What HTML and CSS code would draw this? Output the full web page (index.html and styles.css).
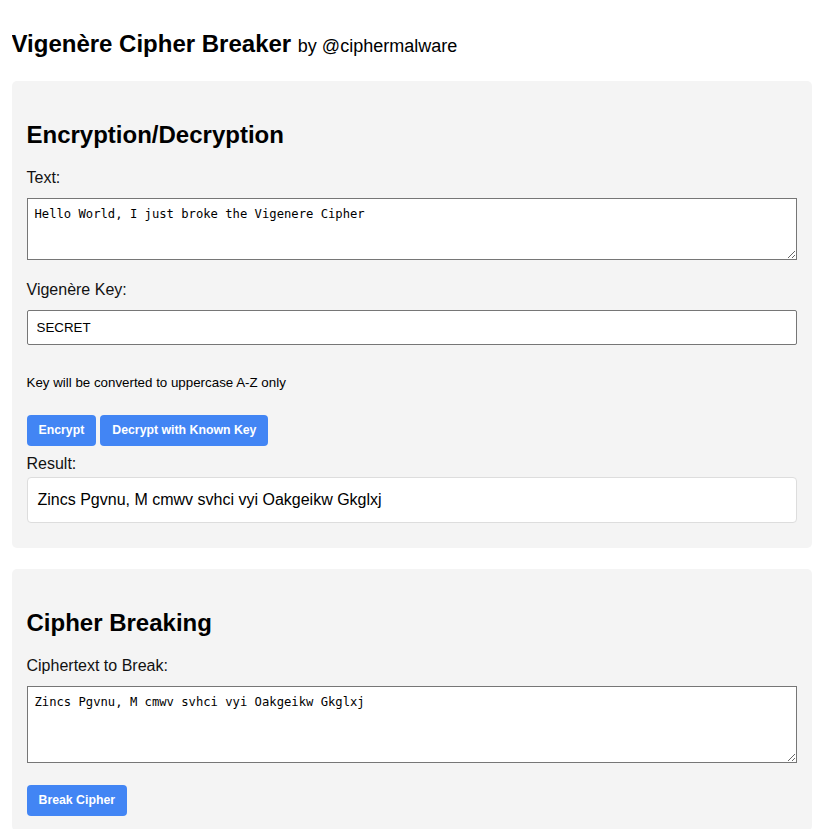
FILE: index.html
```html
<!DOCTYPE html>
<html lang="en">
<head>
<meta charset="utf-8">
<title>Vigenère Cipher Breaker</title>
<link rel="stylesheet" href="styles.css">
</head>
<body>
  <h1 class="title">Vigenère Cipher Breaker <span class="byline">by @ciphermalware</span></h1>

  <section class="panel">
    <h2 class="panel-heading">Encryption/Decryption</h2>

    <div class="field">
      <label class="field-label" for="plain">Text:</label>
      <textarea id="plain" class="text-area text-area--short">Hello World, I just broke the Vigenere Cipher</textarea>
    </div>

    <div class="field field--key">
      <label class="field-label" for="key">Vigenère Key:</label>
      <input id="key" class="text-input" type="text" value="SECRET">
    </div>

    <small class="note">Key will be converted to uppercase A-Z only</small>

    <div class="button-row">
      <button class="btn" type="button">Encrypt</button>
      <button class="btn" type="button">Decrypt with Known Key</button>
    </div>

    <div class="result-label">Result:</div>
    <div class="result-box">Zincs Pgvnu, M cmwv svhci vyi Oakgeikw Gkglxj</div>
  </section>

  <section class="panel">
    <h2 class="panel-heading">Cipher Breaking</h2>

    <div class="field field--break">
      <label class="field-label" for="cipher">Ciphertext to Break:</label>
      <textarea id="cipher" class="text-area text-area--tall">Zincs Pgvnu, M cmwv svhci vyi Oakgeikw Gkglxj</textarea>
    </div>

    <div class="button-row">
      <button class="btn" type="button">Break Cipher</button>
    </div>
  </section>
</body>
</html>
```

FILE: styles.css
```css
html {
  background: #ffffff;
}

body {
  margin: 0 auto;
  max-width: 800px;
  font-family: "Liberation Sans", Arial, sans-serif;
  font-size: 16px;
  color: #000;
}

.title {
  font-size: 24px;
  font-weight: bold;
  line-height: normal;
  margin: 30px 0 23px;
}

.byline {
  font-size: 18px;
  font-weight: normal;
}

.panel {
  background: #f4f4f4;
  border-radius: 5px;
  padding: 20px 15px 15px;
  margin-bottom: 21px;
}

.panel-heading {
  font-size: 24px;
  font-weight: bold;
  line-height: normal;
  margin: 20px 0 20px;
}

.field {
  margin-bottom: 21px;
}

.field--key {
  margin-bottom: 30px;
}

.field--break {
  margin-bottom: 22px;
}

.field-label {
  display: block;
  margin-bottom: 11px;
  color: #111;
}

.text-area {
  display: block;
  box-sizing: border-box;
  width: 100%;
  margin: 0;
  padding: 8px 7px;
  border: 1px solid #767676;
  border-radius: 0;
  background: #fff;
  font-family: "DejaVu Sans Mono", monospace;
  font-size: 12.2px;
  line-height: 14.5px;
  color: #000;
}

.text-area--short {
  height: 62px;
}

.text-area--tall {
  height: 77px;
}

.text-input {
  display: block;
  box-sizing: border-box;
  width: 100%;
  height: 35px;
  margin: 0;
  padding: 0 9px;
  border: 1px solid #767676;
  border-radius: 2px;
  background: #fff;
  font-family: "Liberation Sans", Arial, sans-serif;
  font-size: 13.33px;
  color: #000;
}

.note {
  display: block;
  font-size: 13.33px;
  line-height: 15.33px;
  margin-bottom: 25px;
}

.button-row {
  display: flex;
  gap: 4px;
}

.btn {
  background: #4285f4;
  color: #fff;
  border: none;
  border-radius: 4px;
  padding: 8px 12px;
  font-family: "Liberation Sans", Arial, sans-serif;
  font-size: 12.3px;
  font-weight: bold;
  line-height: 15px;
  cursor: pointer;
}

.result-label {
  margin: 9px 0 4px;
  color: #111;
}

.result-box {
  box-sizing: border-box;
  height: 46px;
  background: #fff;
  border: 1px solid #ddd;
  border-radius: 4px;
  padding: 12px 10px;
  line-height: 19px;
  margin-bottom: 10px;
}
```
